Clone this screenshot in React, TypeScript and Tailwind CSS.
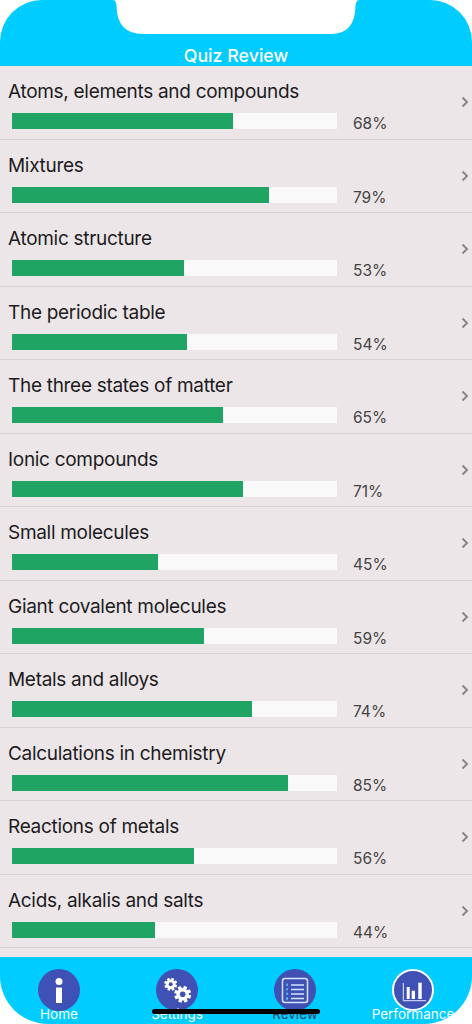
import React from "react";

type Topic = {
    title: string;
    score: number;
};

const TOPICS: Topic[] = [
    { title: "Atoms, elements and compounds", score: 68 },
    { title: "Mixtures", score: 79 },
    { title: "Atomic structure", score: 53 },
    { title: "The periodic table", score: 54 },
    { title: "The three states of matter", score: 65 },
    { title: "Ionic compounds", score: 71 },
    { title: "Small molecules", score: 45 },
    { title: "Giant covalent molecules", score: 59 },
    { title: "Metals and alloys", score: 74 },
    { title: "Calculations in chemistry", score: 85 },
    { title: "Reactions of metals", score: 56 },
    { title: "Acids, alkalis and salts", score: 44 },
];

function TopicRow({ title, score }: Topic) {
    return (
        <div className="flex h-[73.5px] items-center border-b border-[#d5d1d2]">
            <div className="flex-1 min-w-0 self-start pt-[13px]">
                <p className="pl-2 text-[19px] leading-[26px] tracking-[-0.3px] text-[#1c1c1e]">{title}</p>
                <div className="mt-[8px] flex items-start pl-[11.5px]">
                    <div className="h-4 w-[325.5px] bg-[#f9f9f9]">
                        <div className="h-full bg-[#20a464]" style={{ width: `${score}%` }} />
                    </div>
                    <span className="ml-4 mt-[1px] text-[15.5px] leading-5 text-[#444]">{score}%</span>
                </div>
            </div>
            <svg width="8" height="12" viewBox="0 0 8 12" className="mr-[3px]">
                <path d="M1.5 1.5 6 6l-4.5 4.5" fill="none" stroke="#8a8688" strokeWidth="2" />
            </svg>
        </div>
    );
}

function Gear({ cx, cy, body, tip, hole }: { cx: number; cy: number; body: number; tip: number; hole: number }) {
    const toothWidth = body * 0.55;
    return (
        <g>
            {[0, 45, 90, 135, 180, 225, 270, 315].map(angle => (
                <rect
                    key={angle}
                    x={cx - toothWidth / 2}
                    y={cy - tip}
                    width={toothWidth}
                    height={tip - body + 1}
                    fill="#fff"
                    transform={`rotate(${angle + 20} ${cx} ${cy})`}
                />
            ))}
            <circle cx={cx} cy={cy} r={body} fill="#fff" />
            <circle cx={cx} cy={cy} r={hole} fill="#3f51b5" />
        </g>
    );
}

function TabIcon({ name }: { name: string }) {
    if (name === "Home") {
        return (
            <svg viewBox="0 0 42 42" className="h-full w-full">
                <circle cx="21" cy="12.5" r="3.5" fill="#fff" />
                <rect x="18" y="18.5" width="6" height="15.5" fill="#fff" />
            </svg>
        );
    }
    if (name === "Settings") {
        return (
            <svg viewBox="0 0 42 42" className="h-full w-full">
                <Gear cx={14.7} cy={15.3} body={4.8} tip={6.5} hole={2} />
                <Gear cx={26.7} cy={25.3} body={6.2} tip={8.5} hole={2.8} />
            </svg>
        );
    }
    if (name === "Review") {
        return (
            <svg viewBox="0 0 42 42" className="h-full w-full" fill="none" stroke="#d6e4fa">
                <rect x="8.5" y="9.5" width="25" height="24" rx="2.5" strokeWidth="1.5" />
                <path d="M17 16h13M17 20.5h13M17 25h13M17 29.5h13" strokeWidth="1.5" />
                <path d="M13 14.5v2.500M13 19v2.500M13 23.500v2.500M13 28v3" stroke="#4fa6e8" strokeWidth="2" />
            </svg>
        );
    }
    return (
        <svg viewBox="0 0 38 38" className="h-full w-full">
            <path d="M9.3 12v17.700H32" fill="none" stroke="#e6ebfa" strokeWidth="1" />
            <rect x="12.7" y="16" width="3" height="12" fill="#fff" />
            <rect x="17.7" y="19.700" width="3.300" height="8.300" fill="#fff" />
            <rect x="24.300" y="11.700" width="3.400" height="16.300" fill="#fff" />
        </svg>
    );
}

function TabItem({ name }: { name: string }) {
    const isPerformance = name === "Performance";
    return (
        <div className="flex flex-col items-center pt-3">
            <div className={`h-[42px] w-[42px] rounded-full bg-[#3f51b5] ${isPerformance ? "border-2 border-white" : ""}`}>
                <TabIcon name={name} />
            </div>
            <span className={`-mt-[6px] whitespace-nowrap text-[13.5px] leading-[18px] ${name === "Review" ? "text-[#2f4a63]" : "text-white"}`}>
                {name}
            </span>
        </div>
    );
}

export default function App() {
    return (
        <div
            className="relative flex h-[1024px] w-[472px] flex-col overflow-hidden rounded-t-[42px] rounded-b-[48px] bg-white"
            style={{ fontFamily: "Inter, 'Open Sans', sans-serif" }}
        >
            <header className="flex h-[66px] items-end justify-center bg-[#00ccff]">
                <h1 className="text-[17.8px] font-medium leading-[20px] text-white">Quiz Review</h1>
            </header>

            {/* sensor housing cut into the header */}
            <svg viewBox="0 0 250 36" className="absolute left-[110px] top-0 h-9 w-[250px]">
                <path d="M0 0H3Q6.5 .5 6.5 6Q7 34 33 34H221Q245 34 245.5 6Q246 .5 249 0Z" fill="#fff" />
            </svg>

            <main className="flex-1 overflow-hidden bg-[#ede6e8]">
                {TOPICS.map(topic => (
                    <TopicRow key={topic.title} {...topic} />
                ))}
            </main>

            <nav className="grid h-[67px] grid-cols-4 bg-[#00ccff]">
                {["Home", "Settings", "Review", "Performance"].map(name => (
                    <TabItem key={name} name={name} />
                ))}
            </nav>

            {/* home indicator */}
            <div className="absolute bottom-[10px] left-[152px] h-[5px] w-[168px] rounded-full bg-black" />
        </div>
    );
}
